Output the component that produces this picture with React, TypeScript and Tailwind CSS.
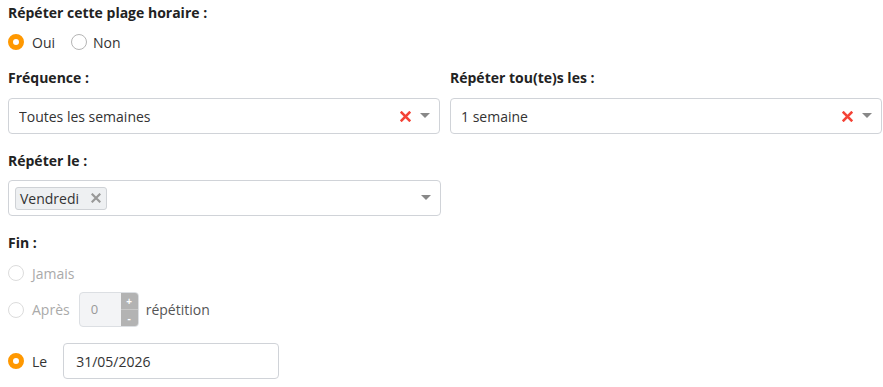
import React from 'react';

const Radio: React.FC<{ checked?: boolean; disabled?: boolean }> = ({ checked = false, disabled = false }) => {
    if (checked) {
        return <span className="block h-4 w-4 shrink-0 rounded-full border-[5px] border-[#ff9800] bg-white" />;
    }
    return (
        <span
            className={`block h-4 w-4 shrink-0 rounded-full border bg-white ${disabled ? 'border-[#dcdcdc]' : 'border-[#b5b5b5]'}`}
        />
    );
};

const ClearIcon: React.FC = () => (
    <svg width="11" height="11" viewBox="0 0 10 10" className="text-[#f44336]">
        <path d="M1.5 1.5 L8.5 8.5 M8.5 1.5 L1.5 8.5" stroke="currentColor" strokeWidth="2.4" strokeLinecap="square" />
    </svg>
);

const Caret: React.FC = () => (
    <svg width="10" height="6" viewBox="0 0 10 6" className="text-[#888]">
        <path d="M0 0 L10 0 L5 5 Z" fill="currentColor" />
    </svg>
);

const Select: React.FC<{ value: string; clearable?: boolean }> = ({ value, clearable = true }) => (
    <div className="flex h-9 items-center rounded border border-[#d0d3d8] bg-white pl-[10px] pr-[9px]">
        <span className="flex-1 truncate text-[#333]">{value}</span>
        {clearable && (
            <span className="mr-[9px] flex items-center">
                <ClearIcon />
            </span>
        )}
        <Caret />
    </div>
);

const Label: React.FC<{ children: React.ReactNode; className?: string }> = ({ children, className = '' }) => (
    <div className={`h-5 font-bold leading-5 text-[#222] ${className}`}>{children}</div>
);

export default function App() {
    return (
        <div className="h-[387px] w-[883px] overflow-hidden bg-white pl-2 pr-px pt-[3px] font-['Open_Sans',sans-serif] text-[14px] text-[#333]">
            <Label>Répéter cette plage horaire :</Label>

            <div className="mt-[9px] flex h-5 items-center">
                <Radio checked />
                <span className="ml-2 mr-[16px]">Oui</span>
                <Radio />
                <span className="ml-[6px]">Non</span>
            </div>

            <div className="mt-4 grid grid-cols-2 gap-x-[10px]">
                <div>
                    <Label>Fréquence :</Label>
                    <div className="mt-[10px]">
                        <Select value="Toutes les semaines" />
                    </div>
                </div>
                <div>
                    <Label>Répéter tou(te)s les :</Label>
                    <div className="mt-[10px]">
                        <Select value="1 semaine" />
                    </div>
                </div>
            </div>

            <div className="w-[433px]">
                <Label className="mt-[17px]">Répéter le :</Label>
                <div className="mt-[9px] flex h-9 items-center rounded border border-[#d0d3d8] bg-white pl-[6px] pr-[9px]">
                    <div className="flex-1">
                        <span className="inline-flex h-[23px] items-center rounded-[3px] border border-[#cfd2d6] bg-[#eef0f2] pl-1 pr-[5px] text-[#333]">
                            Vendredi
                            <svg width="10" height="10" viewBox="0 0 10 10" className="ml-[12px] text-[#999]">
                                <path d="M1.5 1.5 L8.5 8.5 M8.5 1.5 L1.5 8.5" stroke="currentColor" strokeWidth="2.2" strokeLinecap="square" />
                            </svg>
                        </span>
                    </div>
                    <Caret />
                </div>
            </div>

            <Label className="mt-[17px]">Fin :</Label>

            <div className="mt-[10px] flex h-5 items-center text-[#aaa]">
                <Radio disabled />
                <span className="ml-2">Jamais</span>
            </div>

            <div className="mt-[9px] flex h-[35px] items-center">
                <Radio disabled />
                <span className="ml-2 text-[#aaa]">Après</span>
                <div className="ml-[9px] flex h-[35px] w-[60px] overflow-hidden rounded border border-[#dcdfe3] bg-[#f3f4f6]">
                    <span className="flex flex-1 items-center pl-[11px] text-[13px] text-[#999]">0</span>
                    <div className="flex w-[17px] flex-col bg-[#b3b3b3] text-white">
                        <span className="flex flex-1 items-center justify-center border-b border-[#c8c8c8] text-[10px] font-bold leading-none">+</span>
                        <span className="flex flex-1 items-center justify-center text-[10px] font-bold leading-none">-</span>
                    </div>
                </div>
                <span className="ml-[7px] text-[#555]">répétition</span>
            </div>

            <div className="mt-4 flex h-9 items-center">
                <Radio checked />
                <span className="ml-2">Le</span>
                <div className="ml-4 flex h-9 w-[216px] items-center rounded border border-[#d0d3d8] bg-white pl-3">
                    <span className="text-[#333]">31/05/2026</span>
                </div>
            </div>
        </div>
    );
}
